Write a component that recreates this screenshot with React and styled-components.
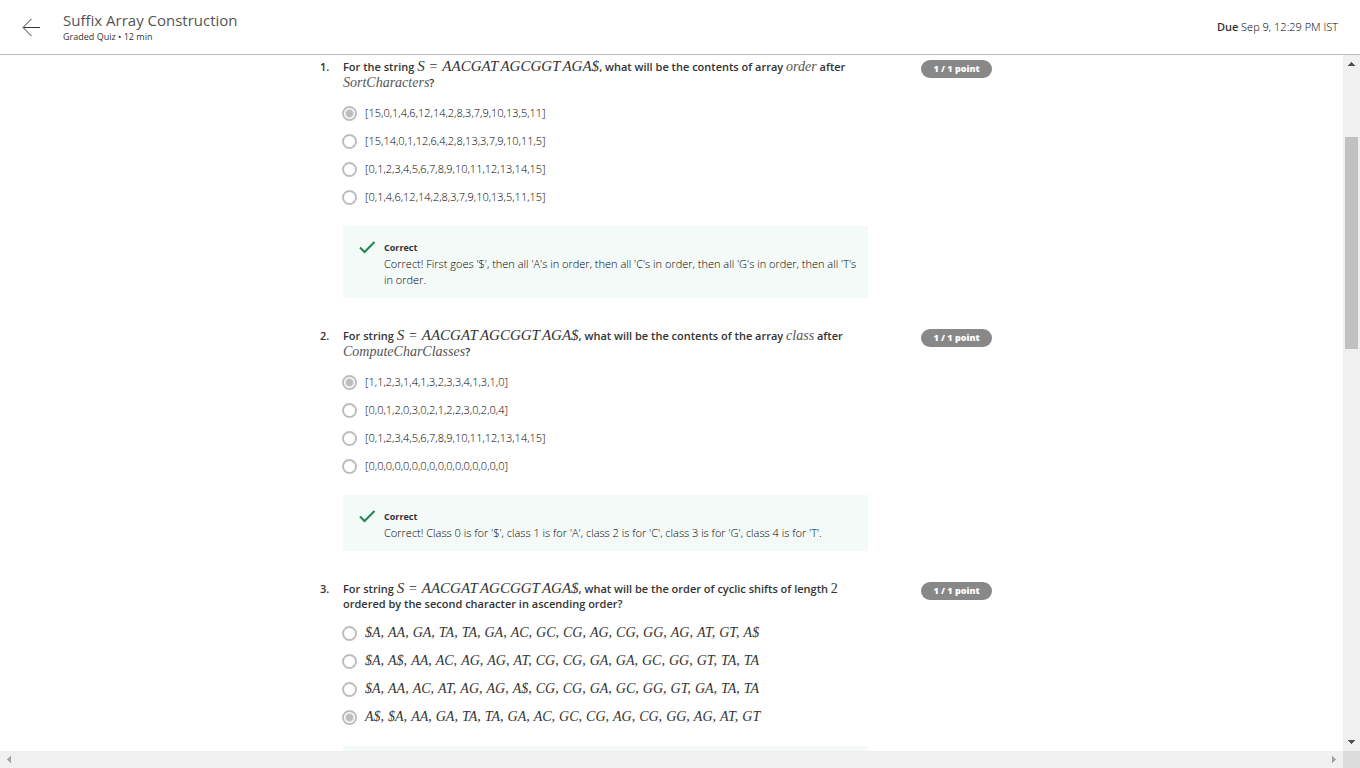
import React from 'react';
import styled, { createGlobalStyle } from 'styled-components';

const GlobalStyle = createGlobalStyle`
  * { box-sizing: border-box; }
  body {
    margin: 0;
    background: #fff;
    color: #333;
    font-family: "Open Sans", "Noto Sans", sans-serif;
    font-size: 12px;
    line-height: 16px;
  }
`;

const Page = styled.div`
  display: flex;
  flex-direction: column;
  height: 100vh;
  overflow: hidden;
`;

const Header = styled.header`
  display: flex;
  align-items: center;
  flex: none;
  height: 55px;
  padding: 0 22px;
  border-bottom: 1px solid #bdbdbd;
`;

const BackButton = styled.button`
  display: flex;
  width: 41px;
  padding: 0;
  border: 0;
  background: none;
`;

const Heading = styled.div`
  flex: 1;
`;

const Title = styled.h1`
  margin: 0;
  font-size: 15px;
  font-weight: 400;
  line-height: 20px;
  color: #555;
`;

const Subtitle = styled.div`
  font-size: 9px;
  line-height: 14px;
`;

const Due = styled.div`
  color: #000;
  font-size: 11px;
  font-weight: 300;
`;

const DueLabel = styled.b`
  color: #333;
  font-weight: 600;
`;

const Body = styled.div`
  display: grid;
  grid-template: minmax(0, 1fr) 17px / minmax(0, 1fr) 17px;
  flex: 1;
  min-height: 0;
`;

const Viewport = styled.main`
  overflow: hidden;
`;

const Quiz = styled.div`
  display: flex;
  flex-direction: column;
  gap: 30px;
  max-width: 703px;
  margin: 0 auto;
  padding-top: 4px;
`;

const QuestionRow = styled.section`
  display: grid;
  grid-template-columns: 23px minmax(0, 525px) auto;
  align-items: start;
`;

const Strong = styled.div`
  font-size: 11px;
  font-weight: 600;
`;

const Prompt = styled(Strong)`
  margin-bottom: 8px;
  line-height: ${(p) => (p.$tight ? '15px' : '16px')};
`;

const Points = styled.div`
  width: 71px;
  height: 18px;
  margin: 1px 0 0 53px;
  border-radius: 9px;
  background: #888;
  color: #fff;
  font-size: 9px;
  font-weight: 800;
  line-height: 18px;
  text-align: center;
`;

const Var = styled.i`
  color: ${(p) => (p.$word ? '#555' : 'inherit')};
  font-family: "Liberation Serif", serif;
  font-size: ${(p) => (p.$term || p.$word ? '14px' : '15px')};
  font-weight: 400;
  line-height: 0;
`;

const Segment = styled(Var)`
  & + & { margin-left: 2px; }
`;

const Upright = styled.span`
  font-family: "Liberation Serif", serif;
  font-size: 14px;
  font-weight: 400;
  line-height: 0;
`;

const Equals = styled(Upright)`
  margin: 0 2px;
`;

const Options = styled.div`
  display: flex;
  flex-direction: column;
  margin-left: -1px;
`;

const Option = styled.label`
  display: flex;
  align-items: center;
  gap: 8px;
  height: 28px;
`;

const Radio = styled.input`
  appearance: none;
  flex: none;
  width: 15px;
  height: 15px;
  margin: 0;
  border: 2px solid #bdbdbd;
  border-radius: 50%;
  background: #fff;
  &:checked {
    background: radial-gradient(circle, #bdbdbd 3px, #fff 5px);
  }
`;

const Answer = styled.span`
  color: #000;
  font-size: 11px;
  font-weight: 300;
`;

const MathList = styled.span`
  display: flex;
  gap: 4px;
`;

const Feedback = styled.div`
  display: flex;
  gap: 8px;
  min-height: 56px;
  margin-top: 15px;
  padding: 14px 10px 10px 16px;
  background: #f4faf8;
`;

const CheckMark = styled.svg`
  flex: none;
`;

const FeedbackTitle = styled.div`
  font-size: 9px;
  font-weight: 700;
`;

const FeedbackText = styled.div`
  color: #000;
  font-size: 11px;
  font-weight: 300;
`;

const ScrollTrack = styled.div`
  display: flex;
  flex-direction: ${(p) => (p.$vertical ? 'column' : 'row')};
  justify-content: space-between;
  align-items: center;
  background: #f0f0f0;
`;

const ScrollArrow = styled.button`
  display: flex;
  align-items: center;
  justify-content: center;
  width: 17px;
  height: 17px;
  padding: 0;
  border: 0;
  background: none;
`;

const ThumbLane = styled.div`
  flex: 1;
  width: 13px;
`;

const Thumb = styled.div`
  height: 32%;
  margin-top: 65px;
  background: #c1c1c1;
`;

const Corner = styled.div`
  background: #dcdcdc;
`;

const turns = { up: 0, right: 90, down: 180, left: 270 };

function Arrow({ dir, color }) {
  return (
    <ScrollArrow aria-label={`Scroll ${dir}`}>
      <svg width="7" height="7" viewBox="0 0 7 7" shapeRendering="crispEdges">
        <path d="M0 6 L3.5 2 L7 6Z" fill={color} transform={`rotate(${turns[dir]} 3.5 3.5)`} />
      </svg>
    </ScrollArrow>
  );
}

const Genome = () => (
  <>
    <Var>S</Var> <Equals>=</Equals> <Segment>AACGAT</Segment>
    <Segment>AGCGGT</Segment>
    <Segment>AGA$</Segment>
  </>
);

const questions = [
  {
    prompt: (
      <>
        For the string <Genome />, what will be the contents of array <Var $word>order</Var> after{' '}
        <Var $word>SortCharacters</Var>?
      </>
    ),
    options: [
      '[15,0,1,4,6,12,14,2,8,3,7,9,10,13,5,11]',
      '[15,14,0,1,12,6,4,2,8,13,3,7,9,10,11,5]',
      '[0,1,2,3,4,5,6,7,8,9,10,11,12,13,14,15]',
      '[0,1,4,6,12,14,2,8,3,7,9,10,13,5,11,15]',
    ],
    selected: 0,
    feedback:
      "Correct! First goes '$', then all 'A's in order, then all 'C's in order, then all 'G's in order, then all 'T's in order.",
  },
  {
    prompt: (
      <>
        For string <Genome />, what will be the contents of the array <Var $word>class</Var> after{' '}
        <Var $word>ComputeCharClasses</Var>?
      </>
    ),
    options: [
      '[1,1,2,3,1,4,1,3,2,3,3,4,1,3,1,0]',
      '[0,0,1,2,0,3,0,2,1,2,2,3,0,2,0,4]',
      '[0,1,2,3,4,5,6,7,8,9,10,11,12,13,14,15]',
      '[0,0,0,0,0,0,0,0,0,0,0,0,0,0,0,0]',
    ],
    selected: 0,
    feedback:
      "Correct! Class 0 is for '$', class 1 is for 'A', class 2 is for 'C', class 3 is for 'G', class 4 is for 'T'.",
  },
  {
    prompt: (
      <>
        For string <Genome />, what will be the order of cyclic shifts of length <Upright>2</Upright>{' '}
        ordered by the second character in ascending order?
      </>
    ),
    math: true,
    options: [
      '$A, AA, GA, TA, TA, GA, AC, GC, CG, AG, CG, GG, AG, AT, GT, A$',
      '$A, A$, AA, AC, AG, AG, AT, CG, CG, GA, GA, GC, GG, GT, TA, TA',
      '$A, AA, AC, AT, AG, AG, A$, CG, CG, GA, GC, GG, GT, GA, TA, TA',
      'A$, $A, AA, GA, TA, TA, GA, AC, GC, CG, AG, CG, GG, AG, AT, GT',
    ],
    selected: 3,
  },
];

function Question({ number, prompt, options, selected, feedback, math }) {
  return (
    <QuestionRow>
      <Strong>{number}.</Strong>
      <div>
        <Prompt $tight={math}>{prompt}</Prompt>
        <Options>
          {options.map((text, i) => (
            <Option key={text}>
              <Radio type="radio" name={`question-${number}`} defaultChecked={i === selected} />
              {math ? (
                <MathList>
                  {text.split(' ').map((term, k) => (
                    <Var $term key={k}>{term}</Var>
                  ))}
                </MathList>
              ) : (
                <Answer>{text}</Answer>
              )}
            </Option>
          ))}
        </Options>
        <Feedback>
          {feedback && (
            <>
              <CheckMark width="17" height="16" viewBox="0 0 17 16" fill="none" stroke="#1f8354" strokeWidth="2">
                <path d="M1 7.5 L5.5 12 L15.5 2" />
              </CheckMark>
              <div>
                <FeedbackTitle>Correct</FeedbackTitle>
                <FeedbackText>{feedback}</FeedbackText>
              </div>
            </>
          )}
        </Feedback>
      </div>
      <Points>1 / 1 point</Points>
    </QuestionRow>
  );
}

export default function App() {
  return (
    <Page>
      <GlobalStyle />
      <Header>
        <BackButton aria-label="Back">
          <svg width="19" height="19" viewBox="0 0 19 19" fill="none" stroke="#333">
            <path d="M18 9.5 H1.5 M9.5 1 L1 9.5 L9.5 18" />
          </svg>
        </BackButton>
        <Heading>
          <Title>Suffix Array Construction</Title>
          <Subtitle>Graded Quiz • 12 min</Subtitle>
        </Heading>
        <Due>
          <DueLabel>Due</DueLabel> Sep 9, 12:29 PM IST
        </Due>
      </Header>
      <Body>
        <Viewport>
          <Quiz>
            {questions.map((q, i) => (
              <Question key={i} number={i + 1} {...q} />
            ))}
          </Quiz>
        </Viewport>
        <ScrollTrack $vertical>
          <Arrow dir="up" color="#505050" />
          <ThumbLane>
            <Thumb />
          </ThumbLane>
          <Arrow dir="down" color="#505050" />
        </ScrollTrack>
        <ScrollTrack>
          <Arrow dir="left" color="#a3a3a3" />
          <Arrow dir="right" color="#a3a3a3" />
        </ScrollTrack>
        <Corner />
      </Body>
    </Page>
  );
}
